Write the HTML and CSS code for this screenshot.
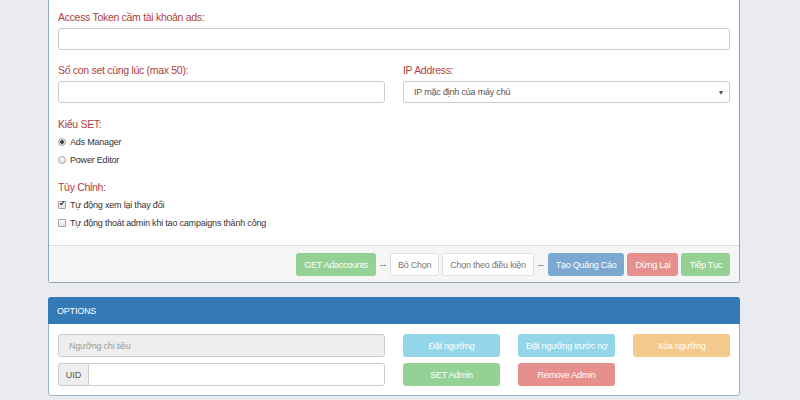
FILE: index.html
```html
<!DOCTYPE html>
<html lang="vi">
<head>
<meta charset="utf-8">
<title>Ads tool</title>
<link rel="stylesheet" href="styles.css">
</head>
<body>
<div class="page">
  <section class="panel panel-main">
    <div class="panel-body">
      <div class="form-group">
        <label class="lbl">Access Token cầm tài khoản ads:</label>
        <div class="control"></div>
      </div>
      <div class="row2">
        <div class="form-group">
          <label class="lbl">Số con set cùng lúc (max 50):</label>
          <div class="control"></div>
        </div>
        <div class="form-group">
          <label class="lbl">IP Address:</label>
          <div class="control select"><span>IP mặc định của máy chủ</span><span class="caret">▾</span></div>
        </div>
      </div>
      <div class="opt-group">
        <label class="lbl">Kiểu SET:</label>
        <label class="opt"><input type="radio" name="kieu" checked> Ads Manager</label>
        <label class="opt"><input type="radio" name="kieu"> Power Editor</label>
      </div>
      <div class="opt-group">
        <label class="lbl">Tùy Chỉnh:</label>
        <label class="opt"><input type="checkbox" checked> Tự động xem lại thay đổi</label>
        <label class="opt"><input type="checkbox"> Tự động thoát admin khi tao campaigns thành công</label>
      </div>
    </div>
    <div class="panel-footer">
      <button class="btn btn-success">GET Adaccounts</button>
      <span class="sep">--</span>
      <button class="btn btn-default">Bỏ Chọn</button>
      <button class="btn btn-default">Chọn theo điều kiện</button>
      <span class="sep">--</span>
      <button class="btn btn-primary">Tạo Quảng Cáo</button>
      <button class="btn btn-danger">Dừng Lại</button>
      <button class="btn btn-success">Tiếp Tục</button>
    </div>
  </section>

  <section class="panel panel-options">
    <div class="panel-heading">OPTIONS</div>
    <div class="panel-body options-body">
      <div class="opt-left">
        <div class="control disabled">Ngưỡng chi tiêu</div>
        <div class="input-group">
          <span class="addon">UID</span>
          <div class="control grow"></div>
        </div>
      </div>
      <div class="opt-right">
        <button class="btn btn-info">Đặt ngưỡng</button>
        <button class="btn btn-info">Đặt ngưỡng trước nợ</button>
        <button class="btn btn-warning">Xóa ngưỡng</button>
        <button class="btn btn-success">SET Admin</button>
        <button class="btn btn-danger">Remove Admin</button>
      </div>
    </div>
  </section>
</div>
</body>
</html>
```

FILE: styles.css
```css
* { box-sizing: border-box; }
html, body { margin: 0; padding: 0; }
body {
  background: #e9ebee;
  font-family: "Liberation Sans", Arial, sans-serif;
  color: #333;
  width: 800px;
  height: 400px;
  overflow: hidden;
}
.page {
  width: 692px;
  margin-left: 48px;
  display: flex;
  flex-direction: column;
}
.panel {
  background: #fff;
  border: 1px solid #8ea7bf;
  border-radius: 3px;
}
.panel-main {
  border-top: 0;
  border-top-left-radius: 0;
  border-top-right-radius: 0;
}
.panel-main .panel-body {
  padding: 10px 9px 13px 9px;
}
.lbl {
  display: block;
  color: #b0403d;
  font-size: 10.5px;
  letter-spacing: -0.3px;
  line-height: 14px;
  margin-bottom: 4px;
}
.form-group { display: flex; flex-direction: column; }
.form-group + .row2 { margin-top: 13px; }
.row2 {
  display: grid;
  grid-template-columns: minmax(0, 1fr) minmax(0, 1fr);
  gap: 18px;
}
.control {
  height: 22px;
  border: 1px solid #ccc;
  border-radius: 3px;
  background: #fff;
  font-size: 9px;
  letter-spacing: -0.2px;
  color: #555;
  display: flex;
  align-items: center;
  padding: 0 10px;
}
.select { justify-content: space-between; padding-right: 6px; }
.caret { font-size: 8px; color: #555; }
.opt-group { display: flex; flex-direction: column; }
.row2 + .opt-group { margin-top: 14px; }
.opt-group + .opt-group { margin-top: 11px; }
.opt-group .lbl { margin-bottom: 2px; }
.opt {
  display: flex;
  align-items: center;
  height: 18px;
  font-size: 9px;
  letter-spacing: -0.2px;
  color: #333;
  gap: 3px;
}
.opt input {
  appearance: none;
  -webkit-appearance: none;
  width: 8px;
  height: 8px;
  margin: 0 1px 0 0;
  border: 1px solid #a0a0a0;
  background: linear-gradient(#fdfdfd, #e4e4e4);
  position: relative;
  flex: none;
}
.opt input[type="radio"] { border-radius: 50%; }
.opt input[type="radio"]:checked {
  background: radial-gradient(circle, #444 0 1.6px, #e8e8e8 2.2px);
}
.opt input[type="checkbox"] { border-radius: 1px; }
.opt input[type="checkbox"]:checked::after {
  content: "✔";
  position: absolute;
  left: 0;
  top: -3px;
  font-size: 8px;
  color: #333;
  line-height: 10px;
}
.panel-footer {
  background: #f5f5f5;
  border-top: 1px solid #ddd;
  padding: 7px 9px 6px 9px;
  display: flex;
  justify-content: flex-end;
  align-items: center;
  gap: 3px;
}
.sep {
  font-size: 9px;
  color: #555;
  margin: 0 1px;
}
.btn {
  height: 23px;
  border: 1px solid transparent;
  border-radius: 3px;
  font-family: "Liberation Sans", Arial, sans-serif;
  font-size: 9px;
  letter-spacing: -0.25px;
  color: #fff;
  padding: 0 7px;
  cursor: pointer;
  white-space: nowrap;
}
.btn-success { background: #95d195; }
.btn-primary { background: #7aa8d0; }
.btn-danger { background: #e68f8c; }
.btn-info { background: #94d6e9; }
.btn-warning { background: #f5c98c; }
.btn-default { background: #fff; border-color: #e0e0e0; color: #777; padding: 0 7px; }

.panel-options {
  margin-top: 14px;
  border-color: #9db3c8;
}
.panel-heading {
  background: #337ab7;
  color: #fff;
  font-size: 9px;
  letter-spacing: -0.2px;
  height: 27px;
  display: flex;
  align-items: center;
  padding: 0 9px;
  margin: -1px -1px 0 -1px;
  border-radius: 3px 3px 0 0;
}
.options-body {
  padding: 10px 9px 9px 9px;
  display: grid;
  grid-template-columns: minmax(0, 1fr) minmax(0, 1fr);
  gap: 18px;
}
.opt-left { display: flex; flex-direction: column; gap: 6px; }
.opt-left .control { height: 23px; }
.disabled { background: #eee; color: #999; }
.input-group { display: flex; }
.addon {
  width: 30px;
  height: 23px;
  background: #eee;
  border: 1px solid #ccc;
  border-right: 0;
  border-radius: 3px 0 0 3px;
  font-size: 9px;
  color: #555;
  display: flex;
  align-items: center;
  justify-content: center;
}
.grow { flex: 1; border-radius: 0 3px 3px 0; }
.opt-right {
  display: grid;
  grid-template-columns: repeat(3, minmax(0, 1fr));
  column-gap: 18px;
  row-gap: 6px;
}
.opt-right .btn { width: 100%; }
```
